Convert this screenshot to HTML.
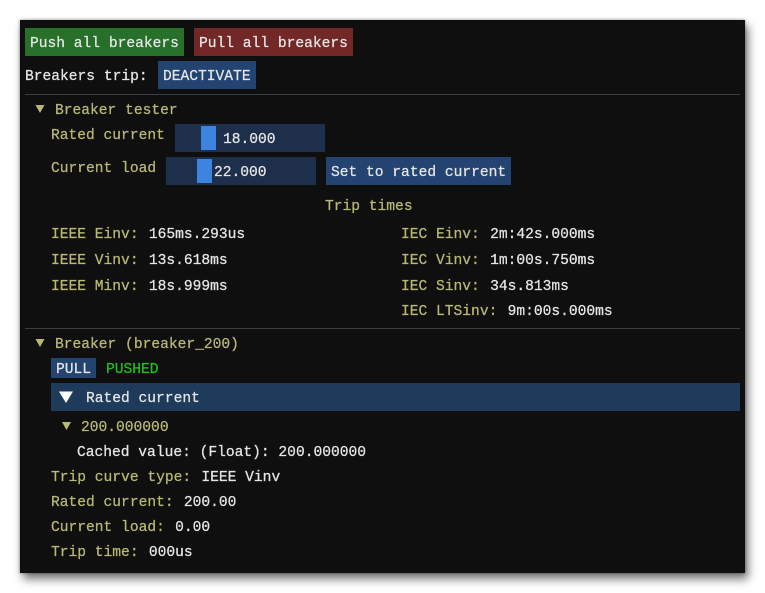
<!DOCTYPE html>
<html>
<head>
<meta charset="utf-8">
<style>
html,body{margin:0;padding:0;width:765px;height:593px;background:#fff;overflow:hidden}
#w{position:absolute;left:20px;top:20px;width:725px;height:553px;background:#0f0f0f;box-shadow:3px 6px 9px 0 rgba(0,0,0,.55),0 0 3px rgba(0,0,0,.4)}
.a{position:absolute}
#r{position:absolute;left:0;top:0;width:765px;height:593px}
.t{position:absolute;font-family:"Liberation Mono",monospace;font-size:14.6px;line-height:18px;white-space:pre;color:#e6e6e6;-webkit-text-stroke:.25px currentColor;filter:blur(.25px)}
.y{color:#b9b974}
.g{color:#1fc01f}
.v{margin-left:1.5px}
</style>
</head>
<body>
<div id="w"></div>
<div id="r">
<div class="a" style="left:25px;top:28px;width:159px;height:28px;background:#27702a"></div>
<div class="a" style="left:194px;top:28px;width:159px;height:28px;background:#732828"></div>
<div class="a" style="left:158px;top:61px;width:98px;height:28px;background:#234370"></div>
<div class="a" style="left:25px;top:94px;width:715px;height:1px;background:#3c3c44"></div>
<div class="a" style="left:175px;top:124px;width:150px;height:28px;background:#1e2f4b"></div>
<div class="a" style="left:201px;top:126px;width:15px;height:24px;background:#3d84e0"></div>
<div class="a" style="left:166px;top:157px;width:150px;height:28px;background:#1e2f4b"></div>
<div class="a" style="left:197px;top:159px;width:15px;height:24px;background:#3d84e0"></div>
<div class="a" style="left:326px;top:157px;width:185px;height:28px;background:#234370"></div>
<div class="a" style="left:25px;top:328px;width:715px;height:1px;background:#3c3c44"></div>
<div class="a" style="left:51px;top:358px;width:45px;height:20px;background:#234370"></div>
<div class="a" style="left:51px;top:383px;width:689px;height:28px;background:#1f3b5c"></div>

<svg class="a" style="left:0;top:0" width="765" height="593">
<polygon points="35.500,105 44.500,105 40,113" fill="#b9b974"/>
<polygon points="35.500,339 44.500,339 40,347" fill="#b9b974"/>
<polygon points="59,391.500 73,391.500 66,403" fill="#ffffff"/>
<polygon points="62,422 71,422 66.500,430" fill="#b9b974"/>
</svg>

<div class="t" style="left:30px;top:35px">Push all breakers</div>
<div class="t" style="left:199px;top:35px">Pull all breakers</div>
<div class="t" style="left:25px;top:68px">Breakers trip:</div>
<div class="t" style="left:163px;top:68px">DEACTIVATE</div>
<div class="t y" style="left:55px;top:102px">Breaker tester</div>
<div class="t y" style="left:51px;top:127px">Rated current</div>
<div class="t" style="left:223px;top:131px">18.000</div>
<div class="t y" style="left:51px;top:160px">Current load</div>
<div class="t" style="left:214px;top:164px">22.000</div>
<div class="t" style="left:331px;top:164px">Set to rated current</div>
<div class="t y" style="left:325px;top:198px">Trip times</div>

<div class="t" style="left:51px;top:226px"><span class="y">IEEE Einv:</span><span class="v"> 165ms.293us</span></div>
<div class="t" style="left:51px;top:252px"><span class="y">IEEE Vinv:</span><span class="v"> 13s.618ms</span></div>
<div class="t" style="left:51px;top:278px"><span class="y">IEEE Minv:</span><span class="v"> 18s.999ms</span></div>
<div class="t" style="left:401px;top:226px"><span class="y">IEC Einv:</span><span class="v"> 2m:42s.000ms</span></div>
<div class="t" style="left:401px;top:252px"><span class="y">IEC Vinv:</span><span class="v"> 1m:00s.750ms</span></div>
<div class="t" style="left:401px;top:278px"><span class="y">IEC Sinv:</span><span class="v"> 34s.813ms</span></div>
<div class="t" style="left:401px;top:303px"><span class="y">IEC LTSinv:</span><span class="v"> 9m:00s.000ms</span></div>

<div class="t y" style="left:55px;top:336px">Breaker (breaker_200)</div>
<div class="t" style="left:56px;top:361px">PULL</div>
<div class="t g" style="left:106px;top:361px">PUSHED</div>
<div class="t" style="left:86px;top:390px">Rated current</div>
<div class="t y" style="left:81px;top:419px">200.000000</div>
<div class="t" style="left:77px;top:444px">Cached value: (Float): 200.000000</div>
<div class="t" style="left:51px;top:469px"><span class="y">Trip curve type:</span><span class="v"> IEEE Vinv</span></div>
<div class="t" style="left:51px;top:494px"><span class="y">Rated current:</span><span class="v"> 200.00</span></div>
<div class="t" style="left:51px;top:519px"><span class="y">Current load:</span><span class="v"> 0.00</span></div>
<div class="t" style="left:51px;top:544px"><span class="y">Trip time:</span><span class="v"> 000us</span></div>
</div>
</body>
</html>
